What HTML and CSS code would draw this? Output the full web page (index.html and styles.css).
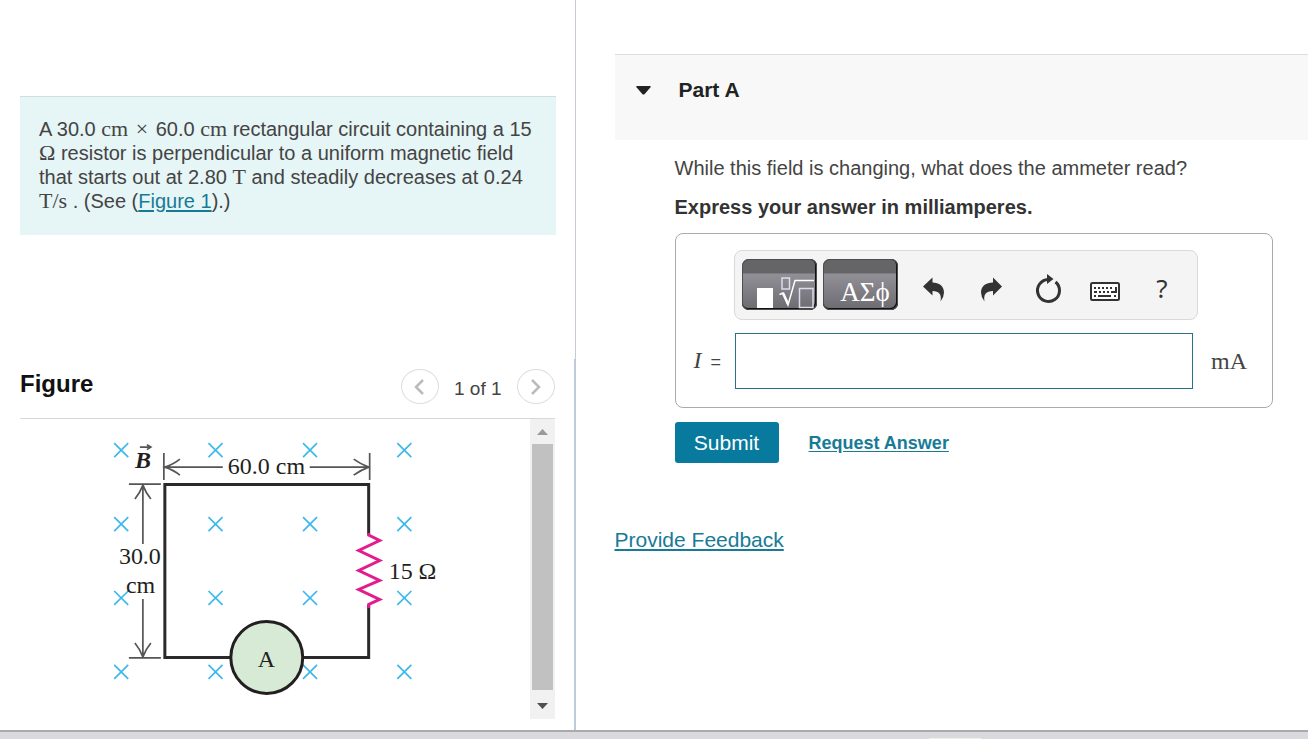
FILE: index.html
```html
<!DOCTYPE html>
<html lang="en">
<head>
<meta charset="utf-8">
<title>Part A</title>
<link rel="stylesheet" href="styles.css">
</head>
<body>
<div class="page">
  <section class="left">
    <div class="problem-area">
      <p class="problem">A 30.0 <span class="math">cm</span> <span class="math times">×</span> 60.0 <span class="math">cm</span> rectangular circuit containing a 15 <span class="math">Ω</span> resistor is perpendicular to a uniform magnetic field that starts out at 2.80 <span class="math">T</span> and steadily decreases at 0.24 <span class="math">T/s</span> . (See (<a href="#figure">Figure 1</a>).)</p>
    </div>
    <div class="figure-area" id="figure">
      <header class="figure-head">
        <h2>Figure</h2>
        <nav class="pager">
          <button class="round" aria-label="Previous figure"><svg width="12" height="18" viewBox="0 0 12 18"><path d="M9 2 2 9 9 16"/></svg></button>
          <span>1 of 1</span>
          <button class="round" aria-label="Next figure"><svg width="12" height="18" viewBox="0 0 12 18"><path d="M2 2 9 9 2 16"/></svg></button>
        </nav>
      </header>
      <div class="viewport">
        <svg class="diagram" viewBox="20 419 510 300" role="img" aria-label="Rectangular circuit with ammeter and resistor in a magnetic field">
          <defs><path id="x" d="M-7-7 7 7M7-7-7 7"/></defs>
          <g class="field">
            <use href="#x" x="121.300" y="450"/><use href="#x" x="215.700" y="450"/><use href="#x" x="310.300" y="450"/><use href="#x" x="404.700" y="450"/>
            <use href="#x" x="121.300" y="524"/><use href="#x" x="215.700" y="524"/><use href="#x" x="310.300" y="524"/><use href="#x" x="404.700" y="524"/>
            <use href="#x" x="121.300" y="598"/><use href="#x" x="215.700" y="598"/><use href="#x" x="310.300" y="598"/><use href="#x" x="404.700" y="598"/>
            <use href="#x" x="121.300" y="672"/><use href="#x" x="215.700" y="672"/><use href="#x" x="310.300" y="672"/><use href="#x" x="404.700" y="672"/>
          </g>
          <g class="dimension">
            <path d="M164 453V480M165 467H223M180 459 Q174 464 165 467 Q174 470 180 475"/>
            <path d="M370 453V480M369 467H310M354 459 Q361 464 369 467 Q361 470 354 475"/>
            <path d="M129 484H161M143 485V544M135 499 Q140 493 143 485 Q146 493 151 499"/>
            <path d="M129 658H161M143 657V599M135 643 Q140 649 143 657 Q146 649 151 643"/>
            <path d="M140 447H150M147 444.500 151 447 147 449.500"/>
          </g>
          <path class="wire" d="M369 535V484.500H165V657.500H369V605"/>
          <path class="resistor" d="M369 533V535L380 540.500 359 550.500 380 560.500 359 570.500 380 580.500 359 589.500 380 599.500 369 604.500V608"/>
          <circle class="meter" cx="267" cy="657.500" r="36"/>
          <g class="labels">
            <text class="vector" x="135" y="468">B</text>
            <text x="228" y="474">60.0 cm</text>
            <text x="119" y="564">30.0</text>
            <text x="126" y="593">cm</text>
            <text x="389" y="579">15 Ω</text>
            <text x="258" y="667">A</text>
          </g>
        </svg>
        <div class="scrollbar" aria-hidden="true">
          <svg width="11" height="6" viewBox="0 0 11 6"><path fill="#999" d="M0 6 5.500 0 11 6z"/></svg>
          <div class="thumb"></div>
          <svg width="11" height="6" viewBox="0 0 11 6"><path fill="#505050" d="M0 0 5.500 6 11 0z"/></svg>
        </div>
      </div>
    </div>
  </section>

  <main class="right">
    <header class="part-head">
      <svg width="15" height="9" viewBox="0 0 15 9"><path fill="#222" d="M1 0H14Q15.500 0 14.500 1.200L8.500 8.200Q7.500 9 6.500 8.200L.5 1.200Q-.5 0 1 0z"/></svg>
      <h1>Part A</h1>
    </header>
    <form class="part-body">
      <p>While this field is changing, what does the ammeter read?</p>
      <p class="strong">Express your answer in milliamperes.</p>
      <div class="answer">
        <div class="toolbar">
          <button type="button" class="template" aria-label="Templates"><svg width="75" height="51" viewBox="0 0 75 51" fill="none" stroke="#fff"><path fill="#fff" stroke="none" d="M15 29H31V49H15z"/><path stroke="#dcdcec" stroke-width="1.500" d="M40 19H47.500V30H40zM57.500 29.500H71V48.500H57.500z"/><path stroke-width="1.500" d="M37.500 35.500 41 34 46 46 53 21.500H72"/><path stroke-width="2.500" d="M41 34 46 45"/></svg></button>
          <button type="button" class="template greek">ΑΣϕ</button>
          <button type="button" class="tool" aria-label="Undo"><svg width="32" height="32" viewBox="0 0 32 32"><path fill="#333" d="M5 12.500 14.500 3.500V8.500C21 8.500 26 12 26 18.500Q26 23 22.500 27.500Q24.500 17 14.500 17V21.500z"/></svg></button>
          <button type="button" class="tool" aria-label="Redo"><svg width="32" height="32" viewBox="0 0 32 32"><path fill="#333" d="M27 12.500 18 3.500V8.500C11 8.500 6 12 6 18.500Q6 23 9.500 27.500Q7.500 17 18 17V21.500z"/></svg></button>
          <button type="button" class="tool" aria-label="Reset"><svg width="32" height="32" viewBox="0 0 32 32"><path fill="none" stroke="#333" stroke-width="3" d="M16 5.500A11 11 0 1 0 23.500 8"/><path fill="#333" d="M15 0 21.500 5 15 10z"/></svg></button>
          <button type="button" class="tool" aria-label="Keyboard shortcuts"><svg width="32" height="32" viewBox="0 0 32 32"><rect x="2" y="9" width="28" height="17" rx="1.500" fill="#fff" stroke="#333" stroke-width="2"/><path fill="none" stroke="#333" stroke-width="2" d="M5 14H24" stroke-dasharray="2 2"/><path fill="none" stroke="#333" stroke-width="2" d="M5 18H8M10 18H12M14 18H16M18 18H20M22 18H27V13M5 22H7M9 22H22M25 22H27"/></svg></button>
          <button type="button" class="tool help" aria-label="Help">?</button>
        </div>
        <label class="symbol" for="current"><i>I</i> =</label>
        <input id="current" type="text">
        <span class="unit">mA</span>
      </div>
      <div class="actions">
        <button type="submit" class="submit">Submit</button>
        <a href="#answer">Request Answer</a>
      </div>
    </form>
    <a class="feedback" href="#feedback">Provide Feedback</a>
  </main>
  <footer class="bottom"><div class="tab"></div></footer>
</div>
</body>
</html>
```
FILE: styles.css
```css
* { box-sizing: border-box; }

body {
  margin: 0;
  background: #fff;
  color: #444;
  font-family: "Liberation Sans", Arial, sans-serif;
  font-size: 20px;
  line-height: 24px;
}

h1, h2, p { margin: 0; }
a { color: #177b96; text-underline-offset: 2px; }
button { font-family: inherit; padding: 0; }

.page {
  display: grid;
  grid-template-columns: 44fr 56fr;
  grid-template-rows: 1fr auto;
  min-height: 100vh;
}

.left { display: flex; flex-direction: column; min-width: 0; }
.problem-area { height: 359px; padding: 96px 19px 0 20px; border-right: 1px solid #c3cbd4; }
.problem {
  padding: 20px 16px 22px 19px;
  background: #e6f5f6;
  border-top: 1px solid #cfdfe2;
}
.math { font-family: "Liberation Serif", serif; font-size: 22px; line-height: 24px; }
.times { padding: 0 2px; }

.figure-area { flex: 1; padding: 0 19px 0 20px; border-right: 2px solid #bccad9; }
.figure-head {
  display: flex;
  justify-content: space-between;
  align-items: flex-start;
  height: 60px;
  border-bottom: 1px solid #d8d8d8;
}
h2 { margin-top: 13px; color: #111; font-size: 24px; }
.pager { display: flex; align-items: center; gap: 15px; margin-top: 10px; font-size: 19px; }
.pager span { padding-top: 4px; }
.round {
  display: grid;
  place-items: center;
  width: 38px;
  height: 35px;
  background: #fff;
  border: 1px solid #ddd;
  border-radius: 50%;
}
.round path { fill: none; stroke: #bbb; stroke-width: 2.500; }

.viewport { display: flex; }
.diagram { flex: 1; min-width: 0; height: 300px; }
.field { stroke: #3cb9ea; stroke-width: 1.700; }
.dimension { fill: none; stroke: #555; stroke-width: 1.700; }
.wire { fill: none; stroke: #2b292a; stroke-width: 3; }
.resistor { fill: none; stroke: #e31c8d; stroke-width: 3; }
.meter { fill: #d7ead5; stroke: #231f20; stroke-width: 3; }
.labels { fill: #231f20; font-family: "Liberation Serif", serif; font-size: 24px; }
.vector { font-weight: bold; font-style: italic; }

.scrollbar {
  display: flex;
  flex-direction: column;
  align-items: center;
  width: 25px;
  padding: 10px 2px;
  background: #f1f1f1;
}
.thumb { width: 21px; height: 246px; margin: 9px 0 13px; background: #c1c1c1; }

.right { padding: 54px 0 0 39px; min-width: 0; }
.part-head {
  display: flex;
  align-items: flex-start;
  gap: 28px;
  height: 86px;
  padding: 23px 21px;
  background: #f8f8f8;
  border-top: 1px solid #ddd;
}
.part-head svg { margin-top: 8px; }
h1 { color: #222; font-size: 21px; }
.part-body { padding: 16px 35px 0 60px; }
.strong { margin: 15px 0 14px; color: #333; font-weight: bold; }

.answer {
  display: grid;
  grid-template-columns: 41px 1fr 61px;
  align-items: center;
  row-gap: 13px;
  padding: 16px 18px 18px;
  border: 1px solid #aaa;
  border-radius: 8px;
}
.toolbar {
  grid-column: 2 / 4;
  display: flex;
  align-items: center;
  gap: 6px;
  height: 70px;
  margin: 0 56px 0 -1px;
  padding: 0 7px 2px;
  background: #f4f4f4;
  border: 1px solid #d9d9d9;
  border-radius: 8px;
}
.template {
  flex: none;
  width: 75px;
  height: 51px;
  color: #fff;
  background: linear-gradient(#656567 0 14px, #929097 15px, #6c6b70);
  border: 0;
  border-radius: 7px;
  box-shadow: inset 0 0 0 1px #4d4d4d, inset -1px -1px 0 1px #111;
}
.template svg { display: block; }
.greek { padding: 15px 0 0 10px; font-family: "Liberation Serif", serif; font-size: 27px; line-height: 30px; }
.tool { display: grid; place-items: center; flex: none; width: 51px; height: 44px; padding-top: 12px; color: #333; background: none; border: 0; }
.template + .tool { margin-left: 5px; }
.help { padding-top: 8px; font-family: "Noto Sans", sans-serif; font-size: 26px; }
.symbol { color: #444; white-space: nowrap; font-size: 18px; }
.symbol i { padding-right: 4px; }
.symbol i, .unit { font-family: "Liberation Serif", serif; font-size: 24px; }
.unit { justify-self: end; padding-right: 7px; }
.answer input { width: 100%; height: 56px; padding: 0 8px; border: 1px solid #29728a; font: inherit; background: #fff; }

.actions { display: flex; align-items: center; gap: 30px; margin-top: 14px; }
.submit { width: 104px; height: 41px; color: #fff; background: #077a9d; border: 0; border-radius: 3px; font-size: 21px; }
.actions a { font-size: 18px; font-weight: bold; }
.feedback { display: inline-block; margin-top: 65px; font-size: 21px; }

.bottom { grid-column: 1 / -1; height: 9px; padding: 6px 25% 0 71%; background: #dad9dd; border-top: 2px solid #aaa9ad; }
.tab { height: 1px; background: #eee; }
```
